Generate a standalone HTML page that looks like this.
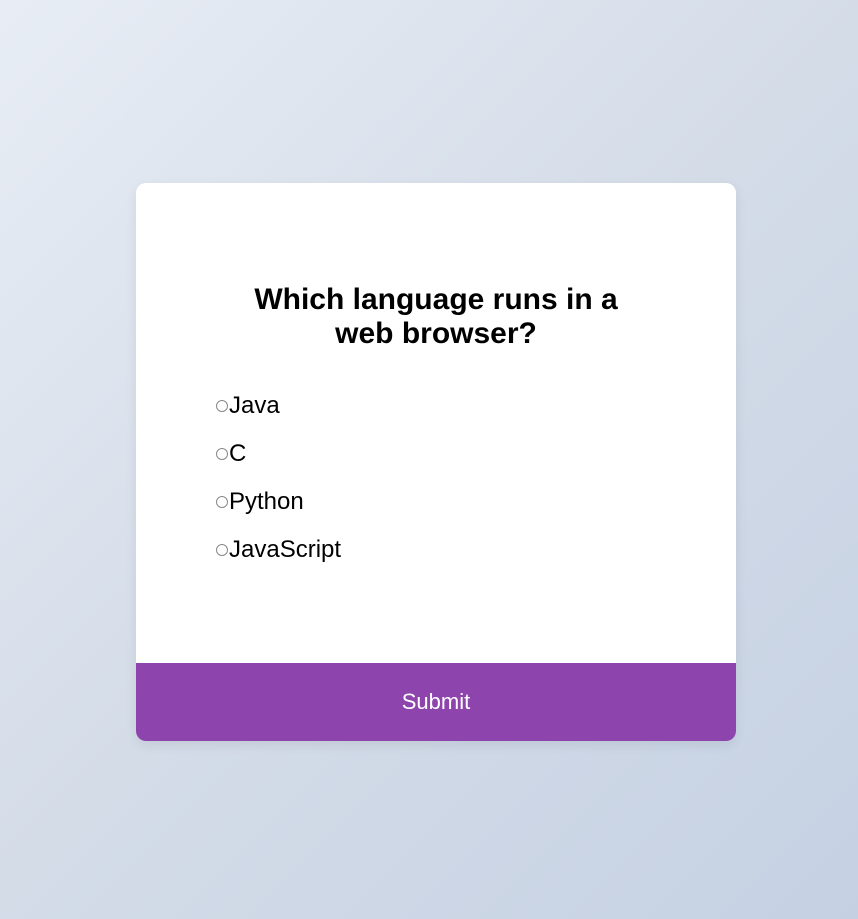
<!DOCTYPE html>
<html><head><style>
html,body{margin:0;padding:0;width:858px;height:919px;overflow:hidden}
body{background:linear-gradient(135deg,#e8edf5 0%,#d4dce8 50%,#c5d1e3 100%);font-family:"Liberation Sans",sans-serif;position:relative}
.card{position:absolute;left:136px;top:183px;width:600px;height:558px;background:#fff;border-radius:10px;overflow:hidden;box-shadow:0 4px 12px rgba(0,0,0,0.08)}
h2{position:absolute;left:100px;width:400px;top:100px;margin:0;text-align:center;font-size:30px;line-height:34px;font-weight:bold;color:#000}
.opt{position:absolute;left:80px;font-size:24px;color:#000;line-height:28px;height:28px}
.r{display:inline-block;width:10px;height:10px;border:1px solid #888;border-radius:50%;vertical-align:middle;margin-right:1px;position:relative;top:-1px}
.btn{position:absolute;left:0;top:480px;width:600px;height:78px;background:#8e44ad;color:#fff;font-size:22px;text-align:center;line-height:78px}
</style></head><body>
<div class="card">
<h2>Which language runs in a web browser?</h2>
<div class="opt" style="top:209px"><span class="r"></span>Java</div>
<div class="opt" style="top:257px"><span class="r"></span>C</div>
<div class="opt" style="top:305px"><span class="r"></span>Python</div>
<div class="opt" style="top:353px"><span class="r"></span>JavaScript</div>
<div class="btn">Submit</div>
</div>
</body></html>
